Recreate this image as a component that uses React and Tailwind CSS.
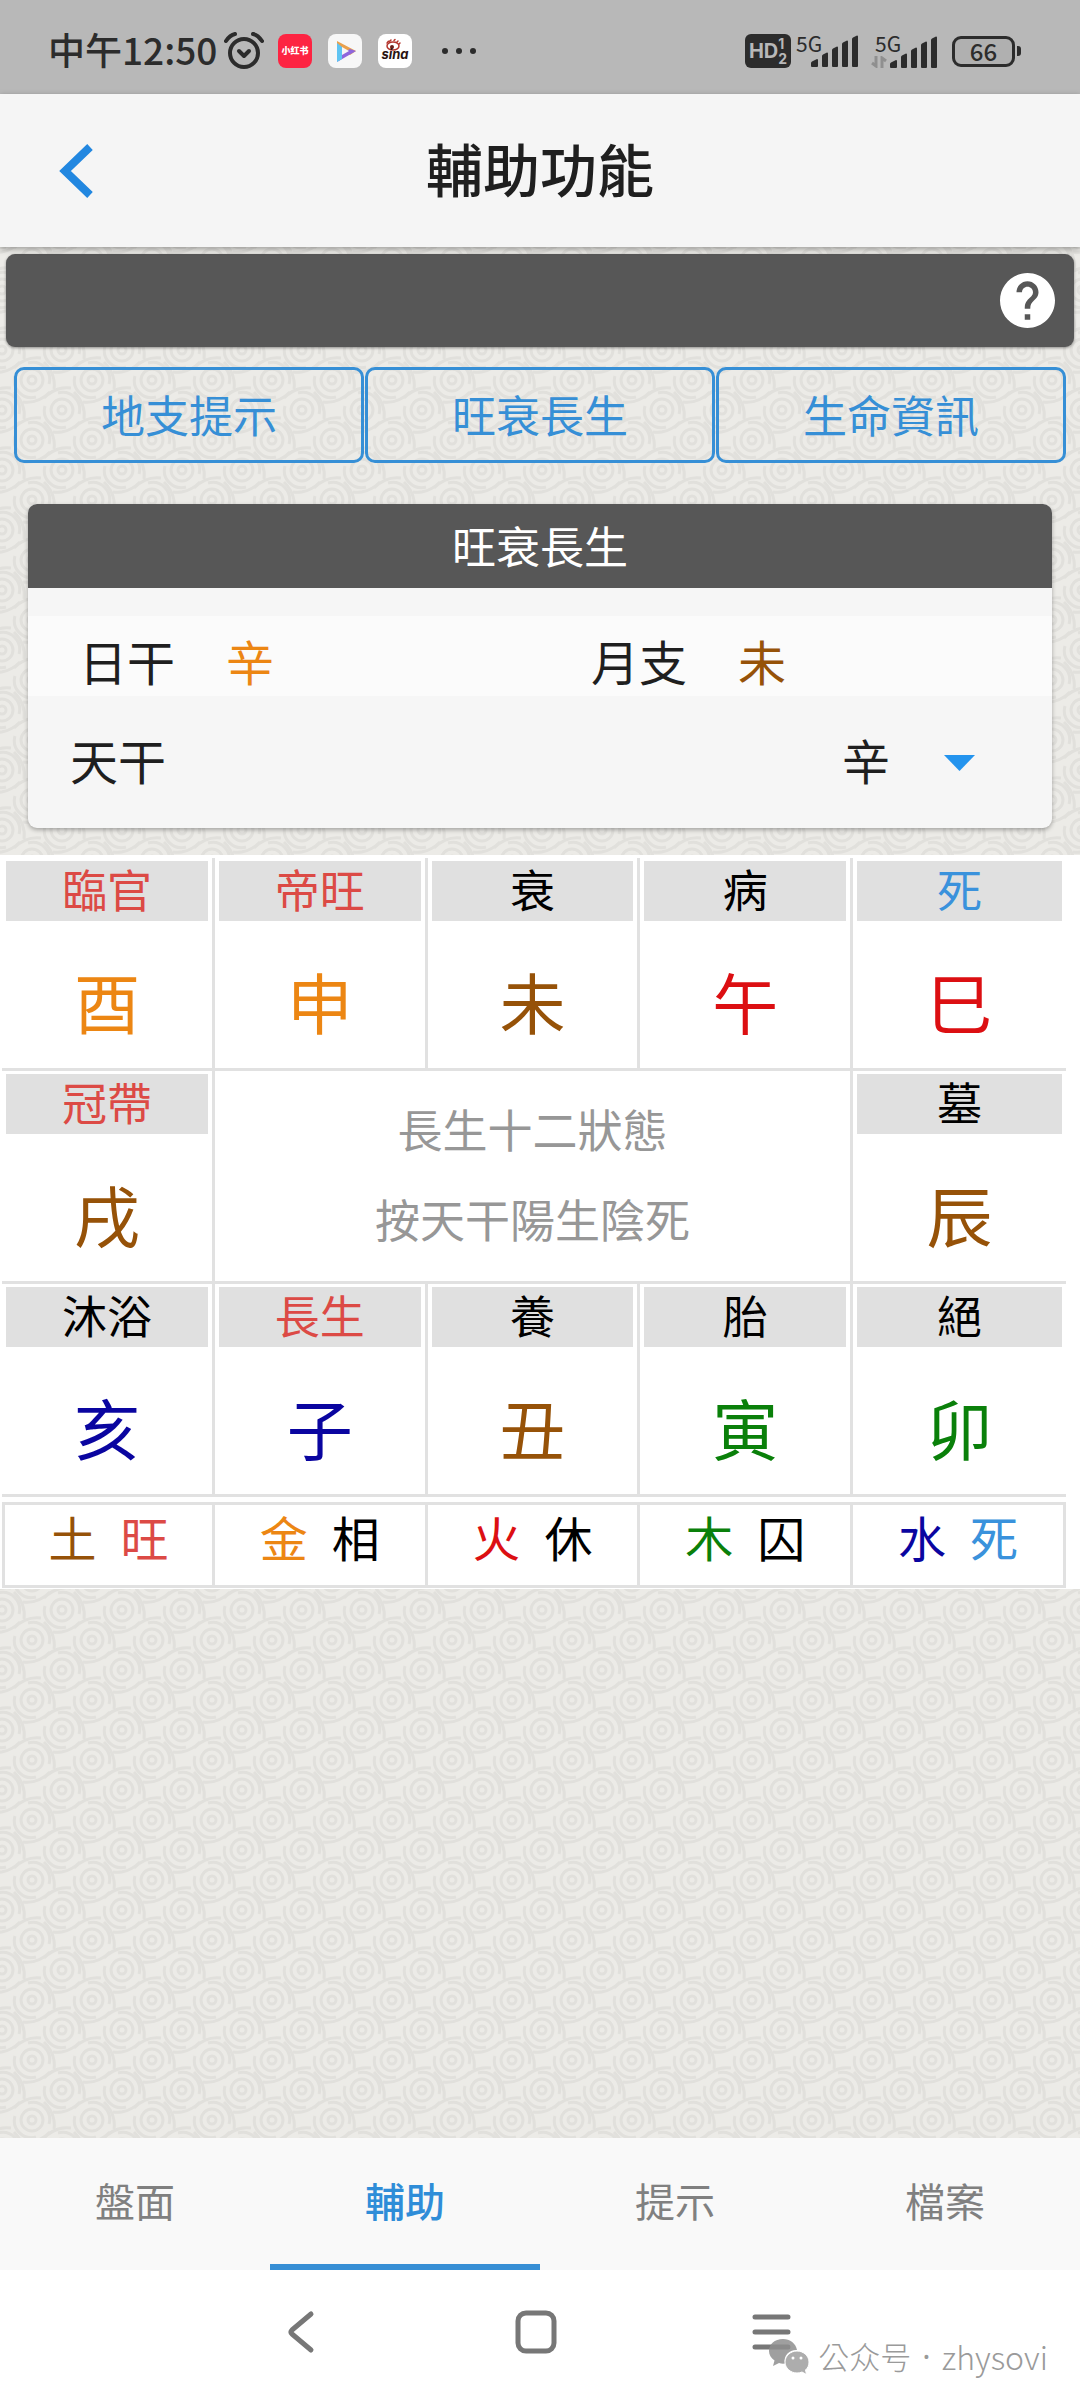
import { useState } from "react";

const FIVE = {
  metal: "text-[#ec8613]",
  earth: "text-[#965208]",
  fire: "text-[#dc0f12]",
  water: "text-[#0a05a0]",
  wood: "text-[#0a800a]",
};

const STAGE = {
  strong: "text-[#dc4a45]",
  plain: "text-black",
  dead: "text-[#3a92dc]",
};

const STEMS = ["甲", "乙", "丙", "丁", "戊", "己", "庚", "辛", "壬", "癸"];

const topRow = [
  { stage: "臨官", tone: "strong", branch: "酉", element: "metal" },
  { stage: "帝旺", tone: "strong", branch: "申", element: "metal" },
  { stage: "衰", tone: "plain", branch: "未", element: "earth" },
  { stage: "病", tone: "plain", branch: "午", element: "fire" },
  { stage: "死", tone: "dead", branch: "巳", element: "fire" },
];

const leftCell = { stage: "冠帶", tone: "strong", branch: "戌", element: "earth" };
const rightCell = { stage: "墓", tone: "plain", branch: "辰", element: "earth" };

const bottomRow = [
  { stage: "沐浴", tone: "plain", branch: "亥", element: "water" },
  { stage: "長生", tone: "strong", branch: "子", element: "water" },
  { stage: "養", tone: "plain", branch: "丑", element: "earth" },
  { stage: "胎", tone: "plain", branch: "寅", element: "wood" },
  { stage: "絕", tone: "plain", branch: "卯", element: "wood" },
];

const seasons = [
  { name: "土", element: "earth", state: "旺", tone: "strong" },
  { name: "金", element: "metal", state: "相", tone: "plain" },
  { name: "火", element: "fire", state: "休", tone: "plain" },
  { name: "木", element: "wood", state: "囚", tone: "plain" },
  { name: "水", element: "water", state: "死", tone: "dead" },
];

const tabs = ["盤面", "輔助", "提示", "檔案"];

const SignalBars = () => (
  <svg width="48" height="32" viewBox="0 0 48 32" fill="#2c2c2c">
    <path d="M0 31v-3q0-1 1-1.500l5-2.500q1 0 1 1v6q0 1-1 1H1q-1 0-1-1z" />
    <path d="M11 31V21q0-1 1-1.500l4-2q1 0 1 1V31q0 1-1 1h-4q-1 0-1-1z" />
    <path d="M21 31V15q0-1 1-1.500l4-2q1 0 1 1V31q0 1-1 1h-4q-1 0-1-1z" />
    <path d="M31 31V9q0-1 1-1.500l4-2q1 0 1 1V31q0 1-1 1h-4q-1 0-1-1z" />
    <path d="M41 31V4q0-1 1-1.500l4-2q1 0 1 1V31q0 1-1 1h-4q-1 0-1-1z" />
  </svg>
);

const StatusBar = () => (
  <div className="flex h-[94px] items-center justify-between bg-[#b8b8b8] pl-12 pr-[59px] pt-2 text-[#2c2c2c]">
    <div className="flex items-center">
      <span className="w-[176px] whitespace-nowrap pb-1 text-[37px] font-medium leading-[40px]">中午12:50</span>
      <svg width="40" height="38" viewBox="0 0 40 38" fill="none" stroke="#2c2c2c" strokeLinecap="round">
        <circle cx="20" cy="21" r="14" strokeWidth="4" />
        <path d="M2 9q4-6 9-7M38 9q-4-6-9-7" strokeWidth="4" />
        <path d="M15 19l5 5 5-5" strokeWidth="4" strokeLinejoin="round" />
      </svg>
      <div className="ml-[14px] flex h-[34px] w-[34px] items-center justify-center rounded-[8px] bg-[#fd2442] text-[9px] font-black text-white">
        小红书
      </div>
      <svg className="ml-4" width="34" height="34" viewBox="0 0 34 34">
        <rect width="34" height="34" rx="8" fill="#f7f7f7" />
        <path d="M9 7l19 10-6 4L9 13z" fill="#eaa04c" />
        <path d="M28 17L9 28l3-8 10-5z" fill="#8e66dd" />
        <path d="M9 9l5 4v12l-5 3z" fill="#5fc4f2" />
        <path d="M14 13l7 4-7 4z" fill="#f7f7f7" />
      </svg>
      <svg className="ml-4" width="34" height="34" viewBox="0 0 34 34">
        <rect width="34" height="34" rx="8" fill="#fff" />
        <g fill="none" stroke="#b3342c" strokeWidth="1.500" strokeLinecap="round">
          <ellipse cx="15" cy="12" rx="6" ry="4" />
          <path d="M9 9q1-2 3-2M12 7l1-1M16 6.500l1-1M19 8l1-1M21 10l1-1" />
        </g>
        <circle cx="14" cy="13" r="2" fill="#6a1d18" />
        <text x="17" y="25" textAnchor="middle" fontSize="13" fontStyle="italic" fontWeight="700" fill="#2a1412" fontFamily="Inter, sans-serif">
          sina
        </text>
      </svg>
      <svg className="ml-[30px]" width="36" height="8" viewBox="0 0 36 8" fill="#2c2c2c">
        <circle cx="3" cy="4" r="3" />
        <circle cx="17" cy="4" r="3" />
        <circle cx="31" cy="4" r="3" />
      </svg>
    </div>

    <div className="flex items-center">
      <div className="flex h-[34px] w-[46px] items-center justify-center rounded-[6px] bg-[#2c2c2c] font-[Inter] font-bold text-[#b8b8b8]">
        <span className="text-[20px] leading-none">HD</span>
        <span className="flex flex-col text-[14px] leading-[15px]">
          <span>1</span>
          <span>2</span>
        </span>
      </div>
      <div className="ml-[5px] flex items-end">
        <span className="w-[15px] self-start text-[21px] leading-[16px]">5G</span>
        <SignalBars />
      </div>
      <div className="ml-3 flex items-end">
        <div className="flex w-[19px] flex-col">
          <span className="w-[15px] pl-1 text-[21px] leading-[16px]">5G</span>
          <svg className="mt-[5px]" width="16" height="12" viewBox="0 0 16 12" fill="none" stroke="#8f8f8f" strokeWidth="3">
            <path d="M1 7l4 3V0M15 5l-4-3v10" />
          </svg>
        </div>
        <SignalBars />
      </div>
      <div className="ml-[14px] flex items-center">
        <div className="flex h-[31px] w-[63px] items-center justify-center rounded-[9px] border-[3px] border-[#2c2c2c] bg-[#b0b0b0] text-[24px] font-medium leading-none">
          66
        </div>
        <span className="ml-[2px] h-[10px] w-[4px] rounded-r-[3px] bg-[#2c2c2c]" />
      </div>
    </div>
  </div>
);

const PaperPattern = () => (
  <svg className="absolute inset-0 h-full w-full" aria-hidden="true">
    <defs>
      <pattern id="paper" x="2" y="13" width="60" height="60" patternUnits="userSpaceOnUse">
        <g fill="none" stroke="#e1e0dc" strokeWidth="3">
          {[[0, 30], [60, 30], [30, 0], [30, 60]].map(([x, y]) => (
            <g key={x + "-" + y}>
              <circle cx={x} cy={y} r="4" />
              <circle cx={x} cy={y} r="11" />
              <path d={`M${x - 4} ${y - 17}a17 17 0 0 1 21 21`} />
              <path d={`M${x + 4} ${y + 17}a17 17 0 0 1 -21 -21`} />
              <path d={`M${x - 18} ${y - 12}q12 -12 27 -10`} />
              <path d={`M${x + 18} ${y + 12}q-12 12 -27 10`} />
              <path d={`M${x + 12} ${y - 18}q12 12 10 27`} />
            </g>
          ))}
        </g>
      </pattern>
    </defs>
    <rect width="100%" height="100%" fill="url(#paper)" />
  </svg>
);

const StageCell = ({ cell, lastCol }) => (
  <td
    className={`h-[213px] border-b-[3px] border-b-[#e1e1e1] p-0 px-1 pt-[3px] align-top ${
      lastCol ? "" : "border-r-[3px] border-r-[#e1e1e1]"
    }`}
  >
    <div className={`h-[60px] bg-[#e0e0e0] text-[45px] leading-[56px] ${STAGE[cell.tone]}`}>{cell.stage}</div>
    <div className={`pt-[31px] text-[66px] leading-[96px] ${FIVE[cell.element]}`}>{cell.branch}</div>
  </td>
);

const StageTable = () => (
  <div className="bg-white pb-px pl-[2px] pr-[14px] pt-[3px] text-center">
    <table className="w-full table-fixed border-separate border-spacing-0">
      <tbody>
        <tr>
          {topRow.map((cell, i) => (
            <StageCell key={cell.branch} cell={cell} lastCol={i === 4} />
          ))}
        </tr>
        <tr>
          <StageCell cell={leftCell} />
          <td
            colSpan={3}
            className="border-b-[3px] border-r-[3px] border-[#e1e1e1] p-0 pb-1 align-middle text-[45px] leading-[90px] text-[#979797]"
          >
            <p>長生十二狀態</p>
            <p>按天干陽生陰死</p>
          </td>
          <StageCell cell={rightCell} lastCol />
        </tr>
        <tr>
          {bottomRow.map((cell, i) => (
            <StageCell key={cell.branch} cell={cell} lastCol={i === 4} />
          ))}
        </tr>
      </tbody>
    </table>

    <table className="mt-[5px] w-full table-fixed border-separate border-spacing-0">
      <tbody>
        <tr>
          {seasons.map((s) => (
            <td
              key={s.name}
              className="h-[86px] border-y-[3px] border-r-[3px] border-[#e1e1e1] p-0 pb-[18px] text-[48px] leading-[60px] first:border-l-[3px]"
            >
              <div className="flex justify-center gap-6">
                <span className={FIVE[s.element]}>{s.name}</span>
                <span className={STAGE[s.tone]}>{s.state}</span>
              </div>
            </td>
          ))}
        </tr>
      </tbody>
    </table>
  </div>
);

const App = () => {
  const [stem, setStem] = useState("辛");
  const [tab, setTab] = useState("輔助");

  return (
    <div className="flex min-h-screen flex-col bg-white font-['Noto_Sans_CJK_TC',sans-serif] text-[#1f1f1f]">
      <StatusBar />

      <header className="relative z-10 grid h-[153px] grid-cols-[120px_1fr_120px] items-center bg-[#f5f5f5] shadow-[0_2px_6px_rgba(0,0,0,0.35)]">
        <button type="button" aria-label="返回" className="pl-[58px]">
          <svg width="36" height="54" viewBox="0 0 36 54" fill="none" stroke="#2287e0" strokeWidth="8">
            <path d="M32 3L7 27l25 24" />
          </svg>
        </button>
        <h1 className="pb-2 text-center text-[57px] font-medium leading-[80px]">輔助功能</h1>
      </header>

      <main className="relative flex-1 bg-[#ecebe7]">
        <PaperPattern />
        <div className="relative">
          <div className="px-[6px] pt-[7px]">
            <div className="flex h-[93px] items-center justify-end rounded-[9px] bg-[#575757] pr-[19px] shadow-[0_1px_3px_rgba(0,0,0,0.4)]">
              <button type="button" aria-label="說明">
                <svg width="55" height="55" viewBox="2 2 20 20" fill="#fff">
                  <path d="M12 2C6.480 2 2 6.480 2 12s4.480 10 10 10 10-4.480 10-10S17.520 2 12 2zm1 17h-2v-2h2v2zm2.070-7.750l-.9.920C13.450 12.900 13 13.500 13 15h-2v-.5c0-1.100.45-2.100 1.170-2.830l1.240-1.260c.37-.36.59-.86.59-1.410 0-1.100-.9-2-2-2s-2 .9-2 2H8c0-2.210 1.790-4 4-4s4 1.790 4 4c0 .88-.36 1.680-.93 2.250z" />
                </svg>
              </button>
            </div>
          </div>

          <div className="grid grid-cols-3 gap-px px-[14px] pt-5">
            {["地支提示", "旺衰長生", "生命資訊"].map((label) => (
              <button
                key={label}
                type="button"
                className="h-24 rounded-[10px] border-[3px] border-[#368fd6] pb-[2px] text-[44px] leading-[60px] text-[#368fd6]"
              >
                {label}
              </button>
            ))}
          </div>

          <section className="mx-7 mt-[41px] overflow-hidden rounded-[9px] bg-[#f6f6f6] shadow-[0_2px_4px_rgba(0,0,0,0.3)]">
            <h2 className="h-[84px] bg-[#575757] text-center text-[44px] leading-[82px] text-white">旺衰長生</h2>
            <div className="pt-7">
              <div className="grid h-20 grid-cols-2 bg-[#fbfbfb] text-[48px] leading-[88px]">
                <p className="flex gap-[51px] pl-[51px]">
                  <span>日干</span>
                  <span className={FIVE.metal}>辛</span>
                </p>
                <p className="flex gap-[51px] pl-[51px]">
                  <span>月支</span>
                  <span className={FIVE.earth}>未</span>
                </p>
              </div>
            </div>
            <div className="flex h-[132px] items-center justify-between pb-[6px] pl-[42px] pr-[77px] text-[48px]">
              <label htmlFor="stem" className="leading-[60px]">天干</label>
              <div className="relative flex items-center">
                <select
                  id="stem"
                  value={stem}
                  onChange={(e) => setStem(e.target.value)}
                  className="appearance-none bg-transparent pr-[84px] leading-[60px]"
                >
                  {STEMS.map((s) => (
                    <option key={s}>{s}</option>
                  ))}
                </select>
                <svg className="pointer-events-none absolute right-0 mt-2" width="31" height="16" viewBox="0 0 31 16">
                  <path d="M0 0h31L15.500 16z" fill="#2494ee" />
                </svg>
              </div>
            </div>
          </section>

          <div className="pt-[27px]">
            <StageTable />
          </div>
        </div>
      </main>

      <nav className="grid h-[132px] grid-cols-4 bg-[#f9f9f9]">
        {tabs.map((name) => (
          <button
            key={name}
            type="button"
            onClick={() => setTab(name)}
            className={`border-b-[6px] pb-[2px] text-[40px] ${
              tab === name ? "border-[#378fd5] font-medium text-[#2f8dd8]" : "border-transparent text-[#808080]"
            }`}
          >
            {name}
          </button>
        ))}
      </nav>

      <div className="relative flex h-[130px] justify-center gap-[193px] bg-white pr-2 pt-10">
        <button type="button" aria-label="上一頁" className="h-11 w-[42px]">
          <svg width="42" height="44" viewBox="0 0 42 44" fill="none" stroke="#777" strokeWidth="5" strokeLinecap="round" strokeLinejoin="round">
            <path d="M31 4L12 20q-2 2 0 4l19 16" />
          </svg>
        </button>
        <button type="button" aria-label="主頁" className="h-11 w-[42px]">
          <svg width="42" height="44" viewBox="0 0 42 44" fill="none" stroke="#777" strokeWidth="5">
            <rect x="3" y="3" width="36" height="38" rx="8" />
          </svg>
        </button>
        <button type="button" aria-label="最近" className="h-11 w-[42px]">
          <svg width="42" height="44" viewBox="0 0 42 44" fill="none" stroke="#777" strokeWidth="5" strokeLinecap="round">
            <path d="M5 7h33M5 22h33M5 37h33" />
          </svg>
        </button>
        <div className="absolute right-8 top-[68px] flex items-center gap-2 text-[#9a9a9a]">
          <svg width="42" height="36" viewBox="0 0 42 36">
            <path
              d="M15 1C6.500 1 1 6.500 1 13c0 4 2 7 5.500 9.500L5 28l6-3q3 1 6 .5C15 17 22 11.500 29 12 28 5.500 22 1 15 1z"
              fill="#8e8e8e"
              fillOpacity="0.85"
            />
            <path
              d="M29 13c-6.500 0-12 5-12 11s5.500 11 12 11q3 0 5-1l4.500 2.500-1-4.500C40 30 41 27 41 24c0-6-5.500-11-12-11z"
              fill="#adadad"
              stroke="#fff"
              strokeWidth="1"
            />
            <circle cx="25" cy="20" r="1.500" fill="#fff" />
            <circle cx="33" cy="20" r="1.500" fill="#fff" />
          </svg>
          <p className="flex gap-[11px] text-[31px] font-light leading-[36px]">
            <span>公众号</span>
            <span className="font-['Noto_Sans',sans-serif] font-normal">·</span>
            <span className="text-[32px]">zhysovi</span>
          </p>
        </div>
      </div>
    </div>
  );
};

export default App;
